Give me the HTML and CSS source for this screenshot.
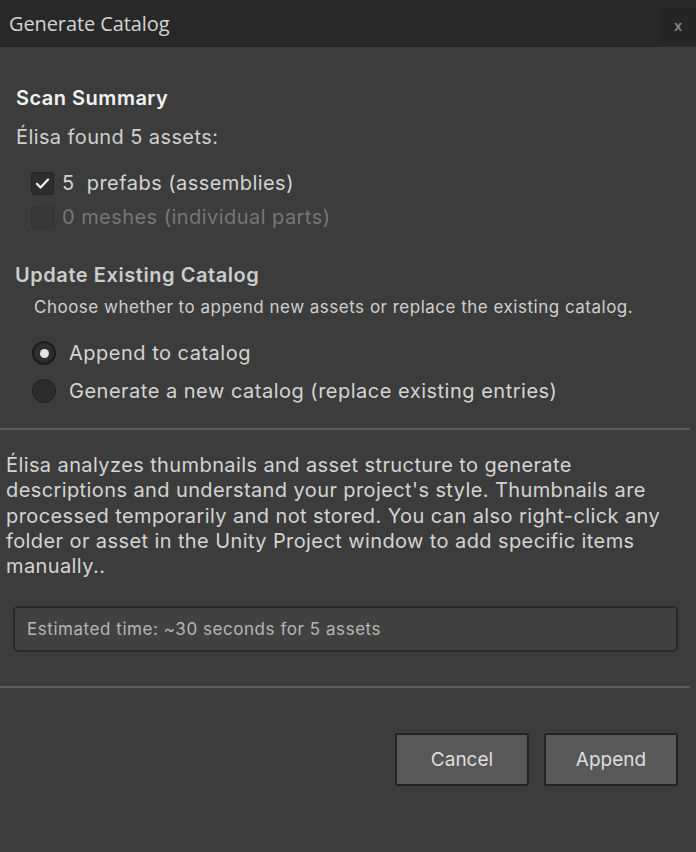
FILE: index.html
```html
<!DOCTYPE html>
<html lang="en">
<head>
<meta charset="utf-8">
<title>Generate Catalog</title>
<link rel="stylesheet" href="styles.css">
</head>
<body>
<div class="window">
  <header class="titlebar">
    <span class="title">Generate Catalog</span>
    <button class="close">x</button>
  </header>
  <main class="content">
    <section class="summary">
      <h2 class="heading">Scan Summary</h2>
      <p class="found">Élisa found 5 assets:</p>
      <div class="checks">
        <label class="check-row">
          <span class="checkbox checked">
            <svg viewBox="0 0 24 24" width="19" height="19"><path d="M5 12.5l4.5 4.5L19 7" fill="none" stroke="#f4f4f4" stroke-width="2.8" stroke-linecap="round" stroke-linejoin="round"/></svg>
          </span>
          <span class="label">5&nbsp; prefabs (assemblies)</span>
        </label>
        <label class="check-row disabled">
          <span class="checkbox"></span>
          <span class="label">0 meshes (individual parts)</span>
        </label>
      </div>
    </section>
    <section class="update">
      <h2 class="heading sub">Update Existing Catalog</h2>
      <p class="hint">Choose whether to append new assets or replace the existing catalog.</p>
      <div class="radios">
        <label class="radio-row">
          <span class="radio selected"><span class="dot"></span></span>
          <span class="label">Append to catalog</span>
        </label>
        <label class="radio-row">
          <span class="radio"></span>
          <span class="label">Generate a new catalog (replace existing entries)</span>
        </label>
      </div>
    </section>
    <hr class="sep first">
    <p class="info">Élisa analyzes thumbnails and asset structure to generate descriptions and understand your project's style. Thumbnails are processed temporarily and not stored. You can also right-click any folder or asset in the Unity Project window to add specific items manually..</p>
    <div class="estimate">Estimated time: ~30 seconds for 5 assets</div>
    <hr class="sep second">
    <div class="actions">
      <button class="btn">Cancel</button>
      <button class="btn">Append</button>
    </div>
  </main>
</div>
</body>
</html>
```
FILE: styles.css
```css
* { box-sizing: border-box; }
html, body { margin: 0; padding: 0; }
body {
  background: #3c3c3c;
  font-family: Inter, "Noto Sans", sans-serif;
  color: #d2d2d2;
  width: 696px;
  height: 852px;
  overflow: hidden;
}
.titlebar {
  height: 47px;
  background: #282828;
  display: flex;
  align-items: center;
  justify-content: space-between;
  padding-left: 9px;
}
.title {
  font-family: "Open Sans", "Noto Sans", sans-serif;
  font-size: 20px;
  color: #d4d4d4;
  letter-spacing: -0.1px;
}
.close {
  align-self: flex-start;
  margin-top: 8px;
  width: 36px;
  height: 35px;
  background: #252525;
  border: none;
  color: #8c8c8c;
  font-family: "Open Sans", sans-serif;
  font-size: 14px;
  font-weight: 600;
  padding: 0;
}
.content { padding-top: 39px; }
.summary, .update { padding-left: 16px; }
.heading {
  margin: 0;
  font-size: 20px;
  line-height: 24px;
  font-weight: 600;
  color: #f2f2f2;
  letter-spacing: 0.5px;
}
.heading.sub { color: #cdcdcd; margin-left: -1px; letter-spacing: 0.56px; }
.found {
  margin: 15px 0 0;
  font-size: 20px;
  line-height: 24px;
  color: #d0d0d0;
  letter-spacing: 0.4px;
}
.checks {
  margin-top: 22px;
  padding-left: 15px;
  display: flex;
  flex-direction: column;
  gap: 10px;
}
.check-row, .radio-row {
  display: flex;
  align-items: center;
  height: 24px;
  font-size: 20px;
  letter-spacing: 0.45px;
}
.check-row .label { margin-left: 8px; color: #d4d4d4; }
.checkbox {
  width: 23px;
  height: 23px;
  border-radius: 3px;
  border: 1px solid #262626;
  background: #2d2d2d;
  display: flex;
  align-items: center;
  justify-content: center;
}
.check-row.disabled .checkbox { background: #393939; border-color: #333333; }
.check-row.disabled .label { color: #777777; }
.update { margin-top: 34px; }
.hint {
  margin: 9px 0 0 18px;
  font-size: 17px;
  line-height: 22px;
  color: #cfcfcf;
  letter-spacing: 0.5px;
}
.radios {
  margin-top: 23px;
  padding-left: 16px;
  display: flex;
  flex-direction: column;
  gap: 14px;
}
.radio-row { letter-spacing: 0.5px; }
.radio {
  width: 24px;
  height: 24px;
  border-radius: 50%;
  background: #2b2b2b;
  border: 1.5px solid #202020;
  display: flex;
  align-items: center;
  justify-content: center;
}
.radio.selected { border: 2px solid #1c1c1c; background: #2e2e2e; }
.dot {
  width: 9px;
  height: 9px;
  border-radius: 50%;
  background: #e4e4e4;
}
.radio-row .label { margin-left: 13px; color: #d4d4d4; }
.sep {
  margin: 0;
  width: 690px;
  height: 2px;
  border: none;
  background: #5c5c5c;
}
.sep.first { margin-top: 25px; }
.info {
  margin: 23px 0 0;
  padding: 0 10px 0 6px;
  font-size: 20px;
  line-height: 25.3px;
  color: #d4d4d4;
  letter-spacing: 0.4px;
}
.estimate {
  margin: 27px 0 0 13px;
  width: 665px;
  height: 46px;
  border: 2px solid #292929;
  border-radius: 5px;
  background: #414141;
  display: flex;
  align-items: center;
  padding-left: 12px;
  font-size: 17px;
  color: #b6b6b6;
  letter-spacing: 0.55px;
}
.sep.second { margin-top: 34px; }
.actions {
  margin-top: 45px;
  display: flex;
  justify-content: flex-end;
  gap: 15px;
  padding-right: 18px;
}
.btn {
  width: 134px;
  height: 53px;
  background: #585858;
  border: 2px solid #232323;
  border-radius: 2px;
  color: #dedede;
  font-family: Inter, sans-serif;
  font-size: 19px;
  padding: 0;
}
```
